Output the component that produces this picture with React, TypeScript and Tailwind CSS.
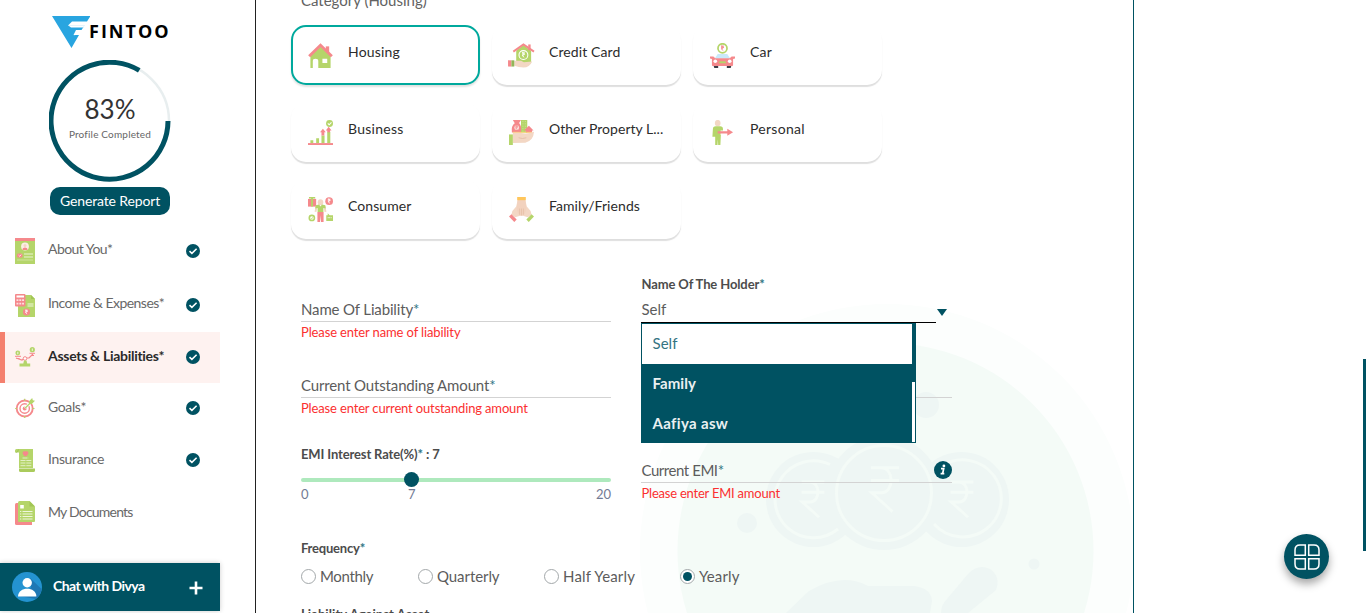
import React from "react";

type IconProps = { className?: string };

const PINK = "#f5898c";
const GREEN = "#b5d56a";
const SKIN = "#f3d7c4";

function Svg({ box, className, children }: { box: string; className?: string; children: React.ReactNode }) {
  return (
    <svg viewBox={box} className={`shrink-0 ${className ?? ""}`} fill="none">
      {children}
    </svg>
  );
}

function Rupee({ x, y, s, color, w = 1 }: { x: number; y: number; s: number; color: string; w?: number }) {
  return (
    <path
      transform={`translate(${x} ${y}) scale(${s})`}
      d="M-3-4.5H3M-3-1.8H3M-3-4.5H-.8C2-4.5 2 .8-.8.8H-2.8L1.6 4.8"
      stroke={color}
      strokeWidth={w / s}
    />
  );
}

/* ---------- sidebar icons ---------- */

function AboutIcon() {
  return (
    <Svg box="0 0 20 26" className="h-[26px] w-5">
      <path d="M0 0h20v26H0z" fill={GREEN} />
      <path d="M0 0h20v3H0z" fill={PINK} />
      <circle cx="10" cy="8.5" r="3.9" fill="#fdeee6" />
      <circle cx="10" cy="7.5" r="1.5" fill={SKIN} />
      <path d="M7.5 12c0-3.2 5-3.2 5 0z" fill={PINK} />
      <rect x="2" y="15.5" width="5.500" height="4" rx="1.500" fill={PINK} />
      <path d="M3.600 17.200l1.100 1 1.600-1.600" stroke="#fff" strokeWidth=".8" />
      <path d="M9 16h9M9 19h9" stroke="#eaf4d2" strokeWidth="1" />
      <path d="M2 22h16" stroke="#cfe49b" strokeWidth="1" />
    </Svg>
  );
}

function IncomeIcon() {
  return (
    <Svg box="0 0 20 23" className="h-[23px] w-5">
      <path d="M3 1h13l4 4v18H3z" fill={GREEN} />
      <path d="M16 1l4 4h-4z" fill="#a2c655" />
      <path d="M12.500 10h6M12.500 12h6" stroke="#eef6dc" />
      <rect width="10.500" height="12.500" rx="1" fill={PINK} />
      <path d="M1.500 1.500h7.500v2h-7.500z" fill="#fff" />
      <path d="M1.500 6.200h7.500M1.500 9.700h7.500" stroke="#fde0e0" strokeWidth="1.800" strokeDasharray="1.900 .9" />
      <circle cx="11.500" cy="18" r="3.600" fill={PINK} />
      <Rupee x={11.5} y={18} s={0.4} color="#fff" w={0.8} />
    </Svg>
  );
}

function AssetsIcon() {
  return (
    <Svg box="0 0 20 20" className="size-5">
      <path d="M1 11l6 2 3-2 4 0 4-4" stroke={PINK} strokeWidth="1.200" />
      <circle cx="10" cy="11.500" r="1.800" fill="#fff" stroke={PINK} />
      <path d="M9 13.500h2.500l.7 3h3V19.500H4.500v-3h3.800z" fill={GREEN} />
      <circle cx="2.800" cy="6" r="2.400" fill={GREEN} />
      <circle cx="17.300" cy="2.700" r="2.600" fill={GREEN} />
      <path d="M0 9.300h6M14.500 6.300H20M1.500 11.500h3M16 8.500h3" stroke={PINK} strokeWidth="1" />
      <path d="M2.800 4.800v2.400M17.300 1.500v2.400" stroke="#fff" strokeWidth=".8" />
    </Svg>
  );
}

function GoalsIcon() {
  return (
    <Svg box="0 0 20 20" className="size-5">
      <circle cx="9.700" cy="10.500" r="8" stroke={PINK} strokeWidth="1.900" />
      <circle cx="9.700" cy="10.500" r="4.700" stroke={PINK} strokeWidth="1.400" />
      <circle cx="9.700" cy="10.500" r="2" fill={PINK} />
      <path d="M9.700.8v2M9.700 18v2M.2 10.500h1.800M17.500 10.500h2" stroke={GREEN} strokeWidth="1.200" />
      <path d="M10 10.200l6-6" stroke="#fff" strokeWidth="2.600" />
      <path d="M10 10.200l6-6" stroke={GREEN} strokeWidth="1.300" />
      <path d="M14 5.800V3.200L17.200 0l.6 2.200 2.200.6L16.800 6z" fill={GREEN} />
    </Svg>
  );
}

function InsuranceIcon() {
  return (
    <Svg box="0 0 20 23" className="h-[23px] w-5">
      <path d="M0 3.500V1.500Q0 0 1.500 0H18v19H4V3.500z" fill={GREEN} />
      <path d="M4 19.500h16v2Q20 23 18.500 23H5.500Q4 23 4 21.500z" fill="#aacb5c" />
      <path d="M1 3.500q2-.3 2.500-3" stroke="#96bc4c" strokeWidth=".7" />
      <path d="M10.500 7.500C5.500 4.500 8 .8 10.500 2.600 13 .8 15.500 4.500 10.500 7.500z" fill={PINK} />
      <path d="M7.500 9h6M5.500 11.500h11.500M5.500 14h11.500M5.500 16.700h11.500" stroke="#e3efc5" strokeWidth="1" strokeDasharray="5 .8" />
    </Svg>
  );
}

function DocumentsIcon() {
  return (
    <Svg box="0 0 20 24" className="h-6 w-5">
      <path d="M0 3.500Q0 2 1.500 2H17v22H1.500Q0 24 0 22.500z" fill={PINK} />
      <path d="M3 1.500Q3 0 4.500 0h10L20 5.500V20q0 1-1 1H4Q3 21 3 20z" fill={GREEN} />
      <path d="M14.500 0v5.500H20z" fill="#a2c655" />
      <path d="M5.200 4h3.600v3.500H5.200z" fill="#fff" />
      <path d="M7.500 10.500h10M7.500 13h10M7.500 15.500h10M7.500 18h10" stroke="#eef6dc" strokeWidth="1" />
      <path d="M5 10.500h1.300M5 13h1.300M5 15.500h1.300M5 18h1.300" stroke="#eef6dc" strokeWidth="1" />
    </Svg>
  );
}

/* ---------- category icons ---------- */

function HousingIcon({ className }: IconProps) {
  return (
    <Svg box="0 0 26 26" className={className}>
      <path d="M18.500 3.500h3.500v6h-3.500z" fill={PINK} />
      <path d="M2.500 13L13 4l10.500 9v13h-21z" fill={GREEN} />
      <path d="M5 26v-7q0-2.500 2.800-2.500 2.900 0 2.900 2.500v7zM15 16.500h5v4.200h-5z" fill="#fff" />
      <path d="M1.200 13.800L13 2.300l11.800 11.500" stroke={PINK} strokeWidth="3" />
    </Svg>
  );
}

function CreditIcon({ className }: IconProps) {
  return (
    <Svg box="0 0 28 26" className={className}>
      <path d="M8.500 8L16 2l8 6v13H8.500z" fill={GREEN} />
      <path d="M21 1.500h2.500v6H21z" fill={PINK} />
      <path d="M5.500 9L16 1.500 27 9" stroke={PINK} strokeWidth="2" />
      <circle cx="16" cy="12.500" r="4.600" stroke="#fff" strokeWidth="1.100" />
      <Rupee x={16} y={12.5} s={0.5} color="#fff" w={1} />
      <path d="M6.500 18.500h7l3 1.500 8.500-.8q-2.500 6.300-9 6.300-5 0-9.500-1.800z" fill={SKIN} />
      <path d="M0 18h3.500v6.500H0z" fill={PINK} />
      <path d="M3.500 18h3v6.500h-3z" fill="#92b557" />
    </Svg>
  );
}

function CarIcon({ className }: IconProps) {
  return (
    <Svg box="0 0 26 26" className={className}>
      <circle cx="13" cy="5.500" r="4.700" fill="#fff" stroke={GREEN} strokeWidth="1.800" />
      <Rupee x={13} y={5.5} s={0.5} color={PINK} w={1} />
      <path d="M3.500 23h5v3h-4zM17.500 23h5l-1 3h-4z" fill="#3d3c45" />
      <path d="M5 16l3-4.500h10L21 16z" fill="#c9e9fa" />
      <path d="M0 14h3.500l2 1.800h15l2-1.800H26v2.200l-2 .5V23q0 1-1 1H3q-1 0-1-1v-6.300l-2-.5z" fill={PINK} />
      <circle cx="5.500" cy="19" r="1.900" fill="#fff" />
      <circle cx="20.500" cy="19" r="1.900" fill="#fff" />
      <path d="M9 21l1-2h6l1 2z" fill={GREEN} />
    </Svg>
  );
}

function BusinessIcon({ className }: IconProps) {
  return (
    <Svg box="0 0 26 26" className={className}>
      <path d="M0 24h26v2H0z" fill={PINK} />
      <path d="M2.500 21h3v3h-3zM8.500 19h3v5h-3zM14 16h3.200v8H14zM20 12.500h3.200V24H20z" fill={GREEN} />
      <path d="M15.500 9l3 3.800h-1.500V16h-3v-3.200h-1.500zM21.500 7l3 3.800h-1.500v2h-3v-2h-1.500z" fill={PINK} />
      <circle cx="22.400" cy="3.600" r="3.600" fill={GREEN} />
      <path d="M20.600 3.600l1.400 1.400L24.400 2.500" stroke="#fff" strokeWidth="1.100" />
    </Svg>
  );
}

function PropertyIcon({ className }: IconProps) {
  return (
    <Svg box="0 0 26 26" className={className}>
      <path d="M12.500 0h6.500v13h-6.500z" fill={GREEN} />
      <path d="M14.500 1v11M17 1v11" stroke="#d3e6a5" strokeWidth=".8" strokeDasharray="1 1.500" />
      <path d="M4 0h8.500l-2 3Q13.500 6 12.500 13h-9.500Q2 6 6 3.300z" fill={PINK} />
      <circle cx="8" cy="8" r="2.500" fill="#fce2de" />
      <Rupee x={8} y={8} s={0.4} color={PINK} w={0.8} />
      <path d="M15.500 11l5.200-5 4.800 5h-1.500v2H17.500v-2z" fill={PINK} />
      <path d="M4 12.800h20" stroke="#ffd066" strokeWidth=".8" />
      <path d="M4 13.200h6l7 .8q5 0 9-1.800-.5 9-9 11.500l-13 .3z" fill={SKIN} />
      <path d="M10 18.500q4 1.500 8 0" stroke="#dfb9a2" strokeWidth=".8" />
      <path d="M0 15h4v11H0z" fill={GREEN} />
    </Svg>
  );
}

function PersonalIcon({ className }: IconProps) {
  return (
    <Svg box="0 0 26 26" className={className}>
      <ellipse cx="8" cy="3.200" rx="3" ry="3.300" fill={SKIN} />
      <path d="M3 9.500q0-3 3-3h4.500q3 0 3 3V11H11v4.500h.3L10.800 26H8.500l-.3-6-.4 6H5.400V17.500H2.500z" fill={GREEN} />
      <path d="M8 11.700h10V9.200l6 3.600-6 3.600v-2.400H8z" fill={PINK} />
    </Svg>
  );
}

function ConsumerIcon({ className }: IconProps) {
  return (
    <Svg box="0 0 26 26" className={className}>
      <path d="M0 2h8.500v8H0z" fill={PINK} />
      <path d="M3.200 0h2v10h-2z" fill={GREEN} />
      <path d="M1 .8h6.500" stroke={GREEN} strokeWidth="1.600" />
      <ellipse cx="13" cy="5.500" rx="2.900" ry="3.200" fill={SKIN} />
      <path d="M9 9.500l-1.200 6M17 9.500l1.200 6" stroke={SKIN} strokeWidth="2" />
      <path d="M8 8.600l3.500-.8 1.500 2 1.500-2 3.500.8.500 3.400-2.500-.5v4h-6v-4L7.500 12z" fill={GREEN} />
      <path d="M9.800 15.500h6.400V26h-2.700L13 19l-.5 7H9.800z" fill={PINK} />
      <circle cx="22" cy="4.300" r="4" fill={PINK} />
      <Rupee x={22} y={4.3} s={0.45} color="#fff" w={0.9} />
      <circle cx="4" cy="21.800" r="2.700" stroke={GREEN} strokeWidth="1.600" />
      <path d="M2.700 21.700l1 1 1.700-1.700" stroke={GREEN} strokeWidth=".9" />
      <path d="M19 19h1.500v-2l2 2H26v6h-7z" fill={GREEN} />
      <path d="M20.500 21.500h4" stroke="#fff" strokeDasharray="1 .6" />
    </Svg>
  );
}

function FamilyIcon({ className }: IconProps) {
  return (
    <Svg box="0 0 26 26" className={className}>
      <path d="M9 3h8l1.500 7 4 4.500 1 4-4 2.500-5-1.500h-3L6.500 21 2.500 18.500l1-4 4-4.500z" fill={SKIN} />
      <path d="M9 3h8l1 9q-1 7-5 7.500Q9 19 8 12z" fill="#f2d2be" />
      <path d="M11 12v6.500M13 12v7M15 12v6.500" stroke="#e1b89e" strokeWidth=".6" />
      <path d="M8.500 0h9v3.300h-9z" fill="#ffc65c" />
      <path d="M0 20.200L2.500 18l5.500 5.500L5.500 26z" fill={PINK} />
      <path d="M26 20.200L23.500 18 18 23.500l2.500 2.500z" fill={GREEN} />
    </Svg>
  );
}

/* ---------- data ---------- */

const menu = [
  { label: "About You*", icon: AboutIcon, row: "h-[54px] pb-[1px]", text: "tracking-[-0.55px]", done: true },
  { label: "Income & Expenses*", icon: IncomeIcon, row: "h-[54px]", text: "-translate-y-px tracking-[-0.53px]", done: true },
  { label: "Assets & Liabilities*", icon: AssetsIcon, row: "h-[51px]", text: "tracking-[-0.3px]", done: true, active: true },
  { label: "Goals*", icon: GoalsIcon, row: "h-[50px]", text: "tracking-[-0.37px]", done: true },
  { label: "Insurance", icon: InsuranceIcon, row: "h-[54px]", text: "tracking-[-0.36px]", done: true },
  { label: "My Documents", icon: DocumentsIcon, row: "h-[52px]", text: "tracking-[-0.78px]", done: false },
];

const categories = [
  { label: "Housing", icon: HousingIcon, text: "tracking-[0.18px]", iconClass: "mr-px size-[25px]", selected: true },
  { label: "Credit Card", icon: CreditIcon, text: "tracking-[0.11px]", iconClass: "-ml-px h-[25px] w-[27px]" },
  { label: "Car", icon: CarIcon, text: "tracking-[0.2px]", iconClass: "mr-px size-[25px]" },
  { label: "Business", icon: BusinessIcon, text: "tracking-[0.28px]", iconClass: "mr-px size-[25px]" },
  { label: "Other Property L...", icon: PropertyIcon, text: "tracking-[0.03px]", iconClass: "mr-px size-[25px]" },
  { label: "Personal", icon: PersonalIcon, text: "tracking-[0.28px]", iconClass: "mr-px size-[25px]" },
  { label: "Consumer", icon: ConsumerIcon, text: "tracking-[0.08px]", iconClass: "mr-px size-[25px]" },
  { label: "Family/Friends", icon: FamilyIcon, text: "tracking-[0.07px]", iconClass: "mr-px size-[25px]" },
];

const frequencies = [
  { label: "Monthly", box: "w-[117px]", text: "tracking-[-0.32px]" },
  { label: "Quarterly", box: "w-[126px]", text: "tracking-[-0.07px]" },
  { label: "Half Yearly", box: "w-[136px]", text: "tracking-[0.16px]" },
  { label: "Yearly", box: "w-[80px]", text: "tracking-[0.11px]", checked: true },
];

/* ---------- pieces ---------- */

function Star() {
  return <span className="text-[#2f7583]">*</span>;
}

function CheckBadge() {
  return (
    <Svg box="0 0 14 14" className="ml-auto mr-5 size-3.5">
      <circle cx="7" cy="7" r="7" fill="#005262" />
      <path d="M3.500 7.100l2.400 2.300 4.700-4.700" stroke="#fff" strokeWidth="1.500" />
    </Svg>
  );
}

function Sidebar() {
  return (
    <aside className="flex w-[220px] shrink-0 flex-col pb-0.5">
      <div className="flex h-[60px] pl-[52px] pt-4">
        <Svg box="0 0 38 32" className="h-8 w-[38px]">
          <path d="M0 0h38.500l-3.500 5.500H20L16 9.500h16.500l-3 4.500H24l-2.500 5h5.500L19.500 32z" fill="#29a5e0" />
          <path d="M16 9.300h16.700L31.300 11.500H19z" fill="#fff" />
          <path d="M21.500 19.300l6.800-.8-2.500-1z" fill="#fff" />
        </Svg>
        <span className="-ml-px mt-[3px] text-[18px] font-bold leading-6 tracking-[2px] text-black font-['Open_Sans',sans-serif]">
          FINTOO
        </span>
      </div>

      <div className="relative ml-[49px] flex h-[122px] w-[122px] flex-col items-center pt-[34px]">
        <svg viewBox="0 0 122 122" className="absolute inset-0 size-full" fill="none">
          <circle cx="61" cy="61" r="59" stroke="#e8eeef" strokeWidth="2.500" />
          <path d="M119 61A58.500 58.500 0 1 1 90.250 10.340" stroke="#005262" strokeWidth="5" />
        </svg>
        <span className="text-[26px] leading-[31px] text-[#333]">83%</span>
        <span className="text-[10px] leading-[18px] tracking-[0.18px] text-[#666]">Profile Completed</span>
      </div>

      <button className="ml-[50px] mt-[5px] h-7 w-[120px] shrink-0 whitespace-nowrap rounded-[10px] bg-[#005262] text-sm leading-7 tracking-[-0.14px] text-white">
        Generate Report
      </button>

      <nav className="mt-[9px] flex flex-col">
        {menu.map(({ label, icon: Icon, row, text, done, active }) => (
          <div
            key={label}
            className={`flex items-center ${row} ${
              active ? "border-l-[5px] border-[#f4806e] bg-[#fef2f0] pb-px pl-[10px]" : "pl-[15px]"
            }`}
          >
            <Icon />
            <span
              className={`-mt-[3px] ml-[13px] mr-px whitespace-nowrap text-sm ${text} ${
                active ? "font-bold text-[#2a2a2a]" : "text-[#686868]"
              }`}
            >
              {label}
            </span>
            {done && <CheckBadge />}
          </div>
        ))}
      </nav>

      <div className="mt-auto flex h-12 items-center bg-[#005262] pl-3 pr-[17px] shadow-[0_0_5px_rgba(0,0,0,0.2)]">
        <Svg box="0 0 30 30" className="size-[30px]">
          <circle cx="15" cy="15" r="15" fill="#2493d1" />
          <path d="M18 6l11.500 11A15 15 0 0 1 24 27l-17-3 12-8z" fill="#1f78b4" />
          <circle cx="15.200" cy="10.800" r="4.700" fill="#fff" />
          <path d="M6 24.500c0-10.500 18.400-10.500 18.400 0z" fill="#fff" />
        </Svg>
        <span className="-mt-[3px] ml-[11px] text-sm font-bold tracking-[-0.53px] text-white">Chat with Divya</span>
        <Svg box="0 0 14 14" className="ml-auto mt-0.5 size-3.5">
          <path d="M7 .5v13M.5 7h13" stroke="#fff" strokeWidth="2.600" />
        </Svg>
      </div>
    </aside>
  );
}

function Backdrop() {
  return (
    <svg viewBox="640 300 494 313" className="absolute -right-px bottom-0 h-[313px] w-[494px]" fill="none">
      <circle cx="887" cy="551" r="247" fill="#fcfefd" />
      <circle cx="885.500" cy="551" r="208" fill="#f4fbf7" />
      <g fill="#eef6f4">
        <circle cx="926" cy="405" r="13" />
        <circle cx="747" cy="523" r="10" />
        <circle cx="1034" cy="564" r="5.500" />
        <circle cx="813.500" cy="499.500" r="47.500" />
        <circle cx="961.500" cy="499.500" r="47.500" />
        <circle cx="884" cy="493" r="57" />
        <path d="M786 613L809 591Q842 572 868 586H914Q931 588 932 601L930 613zM941 613Q941 605 947 599L968 574Q978 563 990 569 1001 577 996 590L968 613z" />
      </g>
      <g stroke="#f4fbf7" strokeWidth="3">
        <path d="M830 464.500A38.500 38.500 0 1 0 838 529M942 466A38.500 38.500 0 1 1 934 524" />
        <circle cx="884" cy="493" r="47.500" />
      </g>
      <Rupee x={885} y={489} s={4.7} color="#f4fbf7" w={3} />
      <Rupee x={813} y={499} s={3.8} color="#f4fbf7" w={3} />
      <Rupee x={962} y={499} s={3.8} color="#f4fbf7" w={3} />
    </svg>
  );
}

function Categories() {
  return (
    <div className="ml-[35px] mt-[15px] grid w-[591px] grid-cols-3 gap-x-3 gap-y-[17px]">
      {categories.map(({ label, icon: Icon, text, iconClass, selected }) => (
        <div
          key={label}
          className={`flex h-[60px] w-[189px] items-center rounded-[15px] bg-white pt-px ${
            selected
              ? "border-2 border-[#00a99d] pl-[15px] shadow-[0_2px_2px_rgba(0,0,0,0.12)]"
              : "pl-[17px] shadow-[0_2px_1px_rgba(0,0,0,0.13)]"
          }`}
        >
          <Icon className={iconClass} />
          <span className={`-mt-[7px] ml-[14px] whitespace-nowrap text-sm text-[#2c2c2c] ${text}`}>{label}</span>
        </div>
      ))}
    </div>
  );
}

function Dropdown() {
  return (
    <ul className="absolute left-0 top-[47px] z-10 flex h-[120px] w-[275px] border border-[#005262] bg-white">
      <div className="grow text-[15px] leading-[39px]">
        <li className="h-10 pl-[10.5px] tracking-[0.05px] text-[#357482]">Self</li>
        <li className="h-10 bg-[#005262] pl-[10.5px] font-bold tracking-[0.07px] text-[#e9f0f1]">Family</li>
        <li className="h-[38px] bg-[#005262] pl-[10.5px] font-bold tracking-[0.34px] text-[#e9f0f1]">Aafiya asw</li>
      </div>
      <div className="w-[3px]">
        <div className="h-[58px] bg-[#005262]" />
      </div>
    </ul>
  );
}

function Form() {
  return (
    <div className="relative ml-[45px] mt-[37px] grid w-[651px] grid-cols-[310px_311px] gap-x-[30px]">
      <div className="flex flex-col whitespace-nowrap">
        <div className="mt-[21px] h-[25px] border-b border-[#d3d3d3] text-[15px] leading-6 tracking-[-0.15px] text-[#5c5c5c]">
          Name Of Liability
          <Star />
        </div>
        <p className="mt-px h-[21px] text-[13px] leading-[18px] tracking-[-0.13px] text-[#fb3030]">
          Please enter name of liability
        </p>
        <div className="mt-[29px] h-[25px] border-b border-[#d3d3d3] text-[15px] leading-6 tracking-[-0.15px] text-[#5c5c5c]">
          Current Outstanding Amount
          <Star />
        </div>
        <p className="mt-px h-[21px] text-[13px] leading-[18px] tracking-[-0.15px] text-[#fb3030]">
          Please enter current outstanding amount
        </p>
        <p className="mt-6 text-[13px] font-bold leading-5 tracking-[-0.13px] text-[#4c4c4c]">
          EMI Interest Rate(%)
          <Star /> : 7
        </p>
        <div className="relative mt-[14px] h-1 rounded-sm bg-[#aee9bd]">
          <span className="absolute left-[103px] top-[-6px] size-[15px] rounded-full bg-[#005262]" />
        </div>
        <div className="mt-[3px] flex h-[18px] text-[13px] leading-[18px] text-[#727b94]">
          <span className="w-[107px]">0</span>
          <span>7</span>
          <span className="ml-auto">20</span>
        </div>
      </div>

      <div className="relative flex flex-col whitespace-nowrap">
        <p className="h-[21px] pl-[0.5px] text-[13px] font-bold leading-4 tracking-[-0.12px] text-[#4c4c4c]">
          Name Of The Holder
          <Star />
        </p>
        <div className="flex h-[27px]">
          <span className="h-[26px] w-[295px] border-b border-black pl-[0.5px] text-[15px] leading-6 text-[#5c5c5c]">Self</span>
          <Svg box="0 0 10 7" className="ml-px mt-3 h-[7px] w-2.5">
            <path d="M0 0h10L5 7z" fill="#005262" />
          </Svg>
        </div>
        <Dropdown />
        <div className="mt-[49px] h-[25px] border-b border-[#d3d3d3]" />
        <div className="mt-[60px] flex h-[25px] items-center border-b border-[#d3d3d3]">
          <span className="pl-[0.5px] text-[15px] leading-[26px] tracking-[-0.45px] text-[#5c5c5c]">
            Current EMI
            <Star />
          </span>
          <Svg box="0 0 18 18" className="ml-auto size-[18px]">
            <circle cx="9" cy="9" r="9" fill="#005262" />
            <circle cx="9.900" cy="4.900" r="1.400" fill="#fff" />
            <path d="M7 7.600h2.700L8.600 12.700h1.700M6.600 12.700h2.200" stroke="#fff" strokeWidth="1.700" />
          </Svg>
        </div>
        <p className="mt-px h-[21px] pl-[0.5px] text-[13px] leading-[18px] tracking-[-0.22px] text-[#fb3030]">Please enter EMI amount</p>
      </div>
    </div>
  );
}

function Frequency() {
  return (
    <div className="relative ml-[45px] mt-[33px]">
      <p className="text-[13px] font-bold leading-5 tracking-[-0.21px] text-[#4c4c4c]">
        Frequency
        <Star />
      </p>
      <div className="mt-2 flex">
        {frequencies.map(({ label, box, text, checked }) => (
          <label key={label} className={`flex h-5 items-center ${box}`}>
            <span className="flex size-[15px] items-center justify-center rounded-full border border-[#a3a8aa] bg-white">
              {checked && <span className="size-[9px] rounded-full bg-[#005262]" />}
            </span>
            <span className={`-mt-px ml-1 whitespace-nowrap text-[15px] leading-5 text-[#5c5c5c] ${text}`}>{label}</span>
          </label>
        ))}
      </div>
      <p className="mt-[18px] text-[13px] font-bold leading-5 tracking-[0.08px] text-[#4c4c4c]">Liability Against Asset</p>
    </div>
  );
}

export default function App() {
  return (
    <div className="relative flex h-[613px] overflow-hidden bg-white font-['Lato',sans-serif]">
      <Sidebar />
      <main className="relative ml-[35px] flex w-[879px] shrink-0 flex-col overflow-hidden border-x border-[#005262] border-l-[#222]">
        <Backdrop />
        <h2 className="-mt-[10px] ml-[45px] h-5 text-[15px] leading-5 tracking-[-0.01px] text-[#626262]">Category (Housing)</h2>
        <Categories />
        <Form />
        <Frequency />
      </main>
      <button className="absolute bottom-[34px] right-[37px] flex size-[45px] items-center justify-center rounded-full bg-[#005262] shadow-[0_5px_8px_rgba(0,0,0,0.35)]">
        <Svg box="0 0 26 26" className="size-[26px]">
          <path
            d="M11.300 11.300H1V6Q1 1 6 1h5.300zM14.700 11.300H25V6Q25 1 20 1h-5.300zM11.300 14.700H1V20Q1 25 6 25h5.300zM14.700 14.700H25V20Q25 25 20 25h-5.300z"
            stroke="#fff"
            strokeWidth="1.500"
          />
        </Svg>
      </button>
      <div className="absolute right-0 top-[359px] h-48 w-[3px] bg-[#005262]" />
    </div>
  );
}
